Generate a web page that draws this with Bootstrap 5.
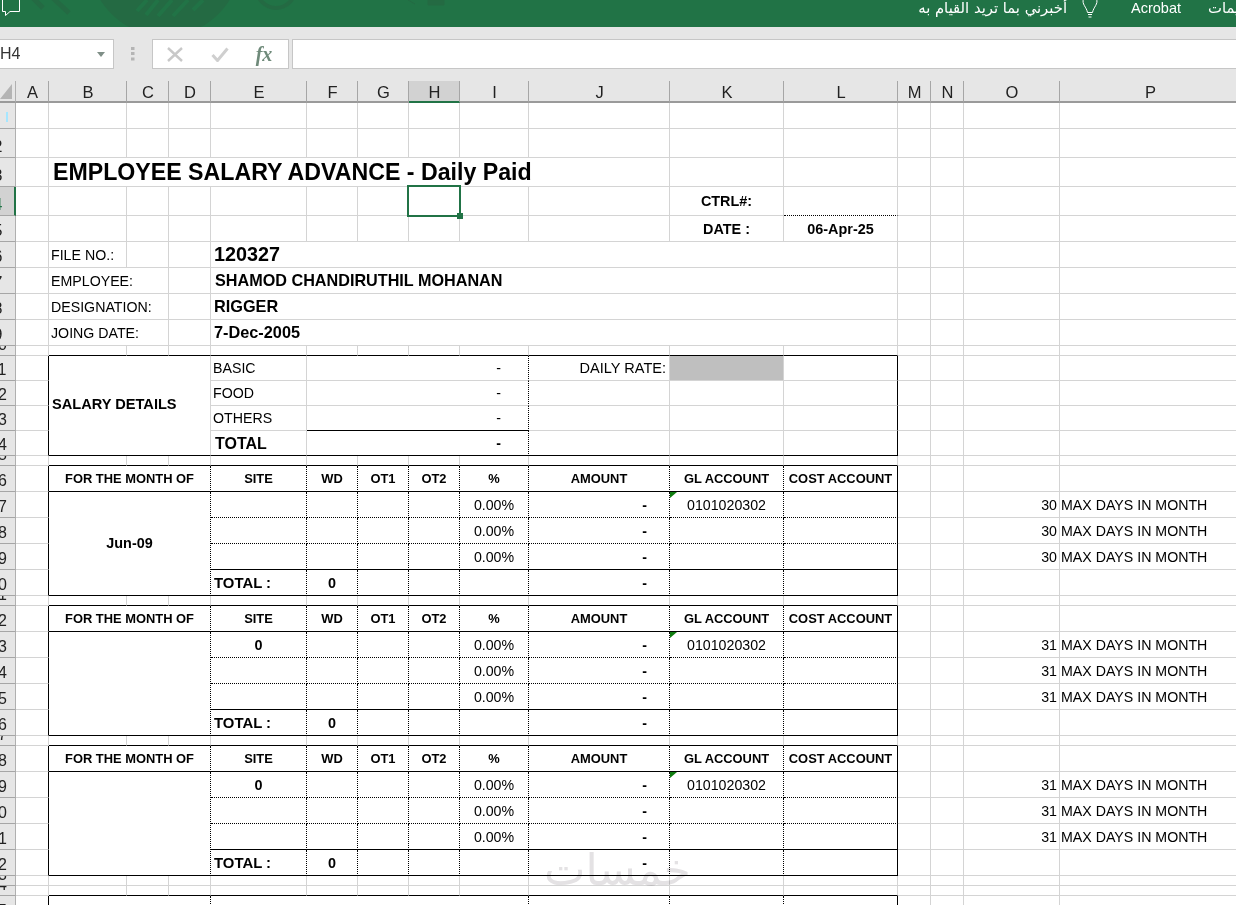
<!DOCTYPE html>
<html lang="en">
<head>
<meta charset="utf-8">
<title>Employee Salary Advance</title>
<link href="https://cdn.jsdelivr.net/npm/bootstrap@5.3.0/dist/css/bootstrap.min.css" rel="stylesheet">
<style>
html,body{margin:0;height:905px;overflow:hidden;background:#fff}
.page{width:1236px;height:905px;overflow:hidden;font-family:"Liberation Sans",Arial,sans-serif;color:#000}
.ribbon{height:27px;background:#217346;color:#fff}
.ribpat{left:0;top:0}
.ribright{width:319px;height:27px;margin-left:auto;white-space:nowrap}
.ribright>*{flex:0 0 auto}
.ask{font-family:"DejaVu Sans",sans-serif;font-size:14.8px;width:150px;line-height:16px;text-align:right}
.bulb{margin-left:15px}
.acro{font-size:14.5px;margin-left:33px;width:77px;line-height:16px}
.tabcut{font-family:"DejaVu Sans",sans-serif;font-size:14.8px;line-height:16px}
.fbar{height:54px;background:#e6e6e6;padding-top:12px}
.namebx{width:115px;height:30px;margin-left:-1px;background:#fff;border:1px solid #c6c6c6;font-size:16px;color:#333;line-height:28px;padding-right:8px}
.dotsw{width:38px;height:30px}
.fxbox{width:137px;height:30px;background:#fff;border:1px solid #c6c6c6;margin-right:3px}
.xic{margin-left:14px}
.chk{margin-left:28px}
.fxtxt{margin-left:26px;font-family:"Liberation Serif",serif;font-style:italic;font-weight:700;font-size:20px;color:#6f8a7a;line-height:28px;width:18px}
.fmla{height:30px;background:#fff;border:1px solid #c6c6c6;border-right:0;flex:1 1 auto}
table.sheet{border-collapse:separate;border-spacing:0;table-layout:fixed;width:1241px;font-size:14.2px;line-height:1}
.c16{width:16px}.c33{width:33px}.c78{width:78px}.c42{width:42px}.c96{width:96px}.c51{width:51px}.c69{width:69px}.c141{width:141px}.c114{width:114px}.c181{width:181px}
.sheet th,.sheet td{padding:1px 2px 0;border-right:1px solid #d4d4d4;border-bottom:1px solid #d4d4d4;font-weight:400;overflow:hidden;white-space:nowrap;vertical-align:middle}
.sheet thead th{height:22px;background:#e6e6e6;border-right:1px solid #a6a6a6;border-bottom:2px solid #9a9a9a;text-align:center;font-size:16.5px;color:#222;padding:2px 0 0 1px}
.sheet thead th.chsel{background:#d2d2d2;border-bottom-color:#217346}
.sheet thead th.corner{border-right-color:#b0b0b0;position:relative}
.cornertri{left:0;top:3px}
.sheet tbody th.rh{background:#e6e6e6;padding:0;border-right:1px solid #b0b0b0;border-bottom:1px solid #a6a6a6;font-size:16px;color:#222}
.sheet tbody th.rhsel{background:#d2d2d2;color:#217346;border-right:2px solid #217346}
.rn{display:flex;align-items:flex-end;justify-content:center;width:32px;margin-left:-18px;line-height:20px;overflow:hidden}
.cyanbit{width:2px;height:10px;background:#a6e6ff;margin:0 0 6px 18px}
tr.h10{height:10px}tr.h10 .rn{height:9px}
tr.h25{height:25px}tr.h25 .rn{height:24px}
tr.h26{height:26px}tr.h26 .rn{height:25px}
tr.h29{height:29px}tr.h29 .rn{height:28px}
.sheet td.r{border-right:1px solid #000}
.sheet td.b{border-bottom:1px solid #000}
.sheet td.dr{border-right:1px dotted #000}
.sheet td.db{border-bottom:1px dotted #000}
.sheet td.ttl{font-size:23.16px;font-weight:700;padding:2px 0 0 4px}
.sheet td.big{font-size:19.8px;font-weight:700;padding-left:3px}
.sheet td.nm{font-size:16.3px;font-weight:700;padding:0 2px 1px 3px}
.sheet td.nmw{font-size:16.2px;padding-left:4px}
.sheet td.hdc{font-size:12.9px;font-weight:700;text-align:center}
.sheet td.bd{font-size:14.4px;font-weight:700}
.sheet td.mon{padding:0 2px 1px}
.sheet td.ttl16{font-size:16px;font-weight:700;padding-left:4px}
.sheet td.sd{font-size:14.6px;font-weight:700;padding:0 2px 2px 3px}
.sheet td.tot{font-size:14.9px;font-weight:700;padding-left:3px}
.sheet td.rate{font-size:14.54px;padding-right:3px;text-align:right}
.sheet td.mx{padding-left:1px}
.sheet td.dash1{text-align:right;padding-right:27px}
.sheet td.dash2{text-align:right;padding-right:22px;font-weight:700}
.sheet td.graybg{background:#bfbfbf}
.sheet td.hostcell{overflow:visible;position:relative}
.tri{left:0;top:0;width:7px;height:6px;background:#107c10;clip-path:polygon(0 0,100% 0,0 100%)}
.cursor{left:-2px;top:-2px;width:54px;height:32px;border:2px solid #217346}
.handle{left:48px;top:26px;width:6px;height:6px;background:#217346}
.wm{left:544px;top:840px;font-family:"DejaVu Sans",sans-serif;font-size:44px;line-height:60px;color:#e4e2e4;mix-blend-mode:multiply;white-space:nowrap;pointer-events:none}
</style>
</head>
<body>
<div class="page position-relative">
  <div class="ribbon position-relative d-flex overflow-hidden">
    <svg class="ribpat position-absolute" width="480" height="27" viewBox="0 0 480 27" aria-hidden="true">
      <g fill="none" stroke="#246a43">
        <path d="M33 -2L43 8M53 -2L69 13" stroke-width="5"/>
        <circle cx="276" cy="-11" r="19" stroke-width="4"/>
      </g>
      <circle cx="165" cy="-40" r="76" fill="#246a43"/>
      <path d="M147 0L137 11M158 0L146 15M172 0L158 16M188 0L173 16M203 0L193 10" stroke="#217346" stroke-width="4" fill="none"/>
      <path d="M408 0L415 4M428 0H444V5H428Z" fill="#246a43" stroke="#246a43"/>
      <path d="M2.5 -2V11.5H5.5V15.5L10 11.5H19.5V-2" fill="none" stroke="#fff"/>
    </svg>
    <div class="ribright d-flex align-items-start position-relative">
      <span class="ask" dir="rtl" lang="ar">أخبرني بما تريد القيام به</span>
      <svg class="bulb" width="16" height="18" viewBox="0 0 16 18" aria-hidden="true"><path d="M1.5 -1C-.5 4 4.5 7 5.5 12.5H10.5C11.5 7 16.5 4 14.5 -1M6 14.5H10M6.5 17H9.5" fill="none" stroke="#fff"/></svg>
      <span class="acro" dir="ltr">Acrobat</span>
      <span class="tabcut"><span dir="rtl" lang="ar">تعليمات</span></span>
    </div>
  </div>
  <div class="fbar d-flex align-items-start">
    <div class="namebx d-flex align-items-center overflow-hidden"><span class="flex-grow-1">H4</span>
      <svg width="8" height="5" viewBox="0 0 8 5" aria-hidden="true"><path d="M0 0H8L4 5Z" fill="#7f8f87"/></svg></div>
    <div class="dotsw d-flex justify-content-center align-items-center">
      <svg width="4" height="14" viewBox="0 0 4 14" aria-hidden="true"><path d="M0 0h3.5v3h-3.5zM0 5h3.5v3h-3.5zM0 10.5h3.5v3h-3.5z" fill="#b4b4b4"/></svg></div>
    <div class="fxbox d-flex align-items-center">
      <svg class="xic" width="16" height="15" viewBox="0 0 16 15" aria-hidden="true"><path d="M1 1L15 14M15 1L1 14" stroke="#c8c8c8" stroke-width="2.4"/></svg>
      <svg class="chk" width="18" height="15" viewBox="0 0 18 15" aria-hidden="true"><path d="M1.5 8L6.5 13.5L16.5 1.5" fill="none" stroke="#cfcfcf" stroke-width="3"/></svg>
      <span class="fxtxt text-center">fx</span>
    </div>
    <div class="fmla"></div>
  </div>
  <table class="sheet">
    <colgroup>
      <col class="c16"><col class="c33"><col class="c78"><col class="c42"><col class="c42"><col class="c96"><col class="c51"><col class="c51"><col class="c51"><col class="c69"><col class="c141"><col class="c114"><col class="c114"><col class="c33"><col class="c33"><col class="c96"><col class="c181">
    </colgroup>
    <thead><tr>
      <th class="corner"><svg class="cornertri position-absolute" width="12" height="15" viewBox="0 0 12 15" aria-hidden="true"><path d="M12 0V15H0Z" fill="#b4b4b4"/></svg></th>
      <th>A</th><th>B</th><th>C</th><th>D</th><th>E</th><th>F</th><th>G</th><th class="chsel">H</th><th>I</th><th>J</th><th>K</th><th>L</th><th>M</th><th>N</th><th>O</th><th>P</th>
    </tr></thead>
    <tbody>
      <tr class="h26"><th class="rh"><div class="rn"><i class="cyanbit"></i></div></th><td></td><td></td><td></td><td></td><td></td><td></td><td></td><td></td><td></td><td></td><td></td><td></td><td></td><td></td><td></td><td></td></tr>
      <tr class="h29"><th class="rh"><div class="rn">2</div></th><td></td><td></td><td></td><td></td><td></td><td></td><td></td><td></td><td></td><td></td><td></td><td></td><td></td><td></td><td></td><td></td></tr>
      <tr class="h29"><th class="rh"><div class="rn">3</div></th><td></td><td colspan="9" class="ttl">EMPLOYEE SALARY ADVANCE - Daily Paid</td><td></td><td></td><td></td><td></td><td></td><td></td></tr>
      <tr class="h29"><th class="rh rhsel"><div class="rn">4</div></th><td></td><td></td><td></td><td></td><td></td><td></td><td></td><td class="hostcell"><div class="cursor position-absolute"></div><div class="handle position-absolute"></div></td><td></td><td></td><td class="bd text-center">CTRL#:</td><td class="db"></td><td></td><td></td><td></td><td></td></tr>
      <tr class="h26"><th class="rh"><div class="rn">5</div></th><td></td><td></td><td></td><td></td><td></td><td></td><td></td><td></td><td></td><td></td><td class="bd text-center">DATE :</td><td class="bd text-center">06-Apr-25</td><td></td><td></td><td></td><td></td></tr>
      <tr class="h26"><th class="rh"><div class="rn">6</div></th><td></td><td>FILE NO.:</td><td></td><td></td><td colspan="8" class="big">120327</td><td></td><td></td><td></td><td></td></tr>
      <tr class="h26"><th class="rh"><div class="rn">7</div></th><td></td><td colspan="2">EMPLOYEE:</td><td></td><td colspan="8" class="nm nmw">SHAMOD CHANDIRUTHIL MOHANAN</td><td></td><td></td><td></td><td></td></tr>
      <tr class="h26"><th class="rh"><div class="rn">8</div></th><td></td><td colspan="2">DESIGNATION:</td><td></td><td colspan="8" class="nm">RIGGER</td><td></td><td></td><td></td><td></td></tr>
      <tr class="h26"><th class="rh"><div class="rn">9</div></th><td></td><td colspan="2">JOING DATE:</td><td></td><td colspan="8" class="nm">7-Dec-2005</td><td></td><td></td><td></td><td></td></tr>
      <tr class="h10"><th class="rh"><div class="rn">10</div></th><td></td><td class="b"></td><td class="b"></td><td class="b"></td><td class="b"></td><td class="b"></td><td class="b"></td><td class="b"></td><td class="b"></td><td class="b"></td><td class="b"></td><td class="b"></td><td></td><td></td><td></td><td></td></tr>

      <tr class="h25"><th class="rh"><div class="rn">11</div></th><td class="r"></td><td colspan="3" rowspan="4" class="b sd">SALARY DETAILS</td><td>BASIC</td><td colspan="4" class="dr dash1">-</td><td class="rate">DAILY RATE:</td><td class="graybg"></td><td class="r"></td><td></td><td></td><td></td><td></td></tr>
      <tr class="h25"><th class="rh"><div class="rn">12</div></th><td class="r"></td><td>FOOD</td><td colspan="4" class="dr dash1">-</td><td></td><td></td><td class="r"></td><td></td><td></td><td></td><td></td></tr>
      <tr class="h25"><th class="rh"><div class="rn">13</div></th><td class="r"></td><td>OTHERS</td><td colspan="4" class="dr b dash1">-</td><td></td><td></td><td class="r"></td><td></td><td></td><td></td><td></td></tr>
      <tr class="h25"><th class="rh"><div class="rn">14</div></th><td class="r"></td><td class="b ttl16">TOTAL</td><td colspan="4" class="dr b dash1 fw-bold">-</td><td class="b"></td><td class="b"></td><td class="r b"></td><td></td><td></td><td></td><td></td></tr>
      <tr class="h10"><th class="rh"><div class="rn">15</div></th><td></td><td class="b"></td><td class="b"></td><td class="b"></td><td class="b"></td><td class="b"></td><td class="b"></td><td class="b"></td><td class="b"></td><td class="b"></td><td class="b"></td><td class="b"></td><td></td><td></td><td></td><td></td></tr>

      <tr class="h26"><th class="rh"><div class="rn">16</div></th><td class="r"></td><td colspan="3" class="hdc dr b">FOR THE MONTH OF</td><td class="hdc dr b">SITE</td><td class="hdc dr b">WD</td><td class="hdc dr b">OT1</td><td class="hdc dr b">OT2</td><td class="hdc dr b">%</td><td class="hdc dr b">AMOUNT</td><td class="hdc dr b">GL ACCOUNT</td><td class="hdc r b">COST ACCOUNT</td><td></td><td></td><td></td><td></td></tr>
      <tr class="h26"><th class="rh"><div class="rn">17</div></th><td class="r"></td><td colspan="3" rowspan="4" class="bd mon b dr text-center">Jun-09</td><td class="dr db"></td><td class="dr db"></td><td class="dr db"></td><td class="dr db"></td><td class="dr db text-center">0.00%</td><td class="dr db dash2">-</td><td class="hostcell dr db text-center"><div class="tri position-absolute"></div>0101020302</td><td class="r db"></td><td></td><td></td><td class="text-end">30</td><td class="mx">MAX DAYS IN MONTH</td></tr>
      <tr class="h26"><th class="rh"><div class="rn">18</div></th><td class="r"></td><td class="dr db"></td><td class="dr db"></td><td class="dr db"></td><td class="dr db"></td><td class="dr db text-center">0.00%</td><td class="dr db dash2">-</td><td class="dr db"></td><td class="r db"></td><td></td><td></td><td class="text-end">30</td><td class="mx">MAX DAYS IN MONTH</td></tr>
      <tr class="h26"><th class="rh"><div class="rn">19</div></th><td class="r"></td><td class="dr b"></td><td class="dr b"></td><td class="dr b"></td><td class="dr b"></td><td class="dr b text-center">0.00%</td><td class="dr b dash2">-</td><td class="dr b"></td><td class="r b"></td><td></td><td></td><td class="text-end">30</td><td class="mx">MAX DAYS IN MONTH</td></tr>
      <tr class="h26"><th class="rh"><div class="rn">20</div></th><td class="r"></td><td class="tot dr b">TOTAL :</td><td class="bd dr b text-center">0</td><td class="dr b"></td><td class="dr b"></td><td class="dr b"></td><td class="dr b dash2">-</td><td class="dr b"></td><td class="r b"></td><td></td><td></td><td></td><td></td></tr>
      <tr class="h10"><th class="rh"><div class="rn">21</div></th><td></td><td class="b"></td><td class="b"></td><td class="b"></td><td class="b"></td><td class="b"></td><td class="b"></td><td class="b"></td><td class="b"></td><td class="b"></td><td class="b"></td><td class="b"></td><td></td><td></td><td></td><td></td></tr>

      <tr class="h26"><th class="rh"><div class="rn">22</div></th><td class="r"></td><td colspan="3" class="hdc dr b">FOR THE MONTH OF</td><td class="hdc dr b">SITE</td><td class="hdc dr b">WD</td><td class="hdc dr b">OT1</td><td class="hdc dr b">OT2</td><td class="hdc dr b">%</td><td class="hdc dr b">AMOUNT</td><td class="hdc dr b">GL ACCOUNT</td><td class="hdc r b">COST ACCOUNT</td><td></td><td></td><td></td><td></td></tr>
      <tr class="h26"><th class="rh"><div class="rn">23</div></th><td class="r"></td><td colspan="3" rowspan="4" class="bd b dr text-center"></td><td class="bd dr db text-center">0</td><td class="dr db"></td><td class="dr db"></td><td class="dr db"></td><td class="dr db text-center">0.00%</td><td class="dr db dash2">-</td><td class="hostcell dr db text-center"><div class="tri position-absolute"></div>0101020302</td><td class="r db"></td><td></td><td></td><td class="text-end">31</td><td class="mx">MAX DAYS IN MONTH</td></tr>
      <tr class="h26"><th class="rh"><div class="rn">24</div></th><td class="r"></td><td class="dr db"></td><td class="dr db"></td><td class="dr db"></td><td class="dr db"></td><td class="dr db text-center">0.00%</td><td class="dr db dash2">-</td><td class="dr db"></td><td class="r db"></td><td></td><td></td><td class="text-end">31</td><td class="mx">MAX DAYS IN MONTH</td></tr>
      <tr class="h26"><th class="rh"><div class="rn">25</div></th><td class="r"></td><td class="dr b"></td><td class="dr b"></td><td class="dr b"></td><td class="dr b"></td><td class="dr b text-center">0.00%</td><td class="dr b dash2">-</td><td class="dr b"></td><td class="r b"></td><td></td><td></td><td class="text-end">31</td><td class="mx">MAX DAYS IN MONTH</td></tr>
      <tr class="h26"><th class="rh"><div class="rn">26</div></th><td class="r"></td><td class="tot dr b">TOTAL :</td><td class="bd dr b text-center">0</td><td class="dr b"></td><td class="dr b"></td><td class="dr b"></td><td class="dr b dash2">-</td><td class="dr b"></td><td class="r b"></td><td></td><td></td><td></td><td></td></tr>
      <tr class="h10"><th class="rh"><div class="rn">27</div></th><td></td><td class="b"></td><td class="b"></td><td class="b"></td><td class="b"></td><td class="b"></td><td class="b"></td><td class="b"></td><td class="b"></td><td class="b"></td><td class="b"></td><td class="b"></td><td></td><td></td><td></td><td></td></tr>

      <tr class="h26"><th class="rh"><div class="rn">28</div></th><td class="r"></td><td colspan="3" class="hdc dr b">FOR THE MONTH OF</td><td class="hdc dr b">SITE</td><td class="hdc dr b">WD</td><td class="hdc dr b">OT1</td><td class="hdc dr b">OT2</td><td class="hdc dr b">%</td><td class="hdc dr b">AMOUNT</td><td class="hdc dr b">GL ACCOUNT</td><td class="hdc r b">COST ACCOUNT</td><td></td><td></td><td></td><td></td></tr>
      <tr class="h26"><th class="rh"><div class="rn">29</div></th><td class="r"></td><td colspan="3" rowspan="4" class="bd b dr text-center"></td><td class="bd dr db text-center">0</td><td class="dr db"></td><td class="dr db"></td><td class="dr db"></td><td class="dr db text-center">0.00%</td><td class="dr db dash2">-</td><td class="hostcell dr db text-center"><div class="tri position-absolute"></div>0101020302</td><td class="r db"></td><td></td><td></td><td class="text-end">31</td><td class="mx">MAX DAYS IN MONTH</td></tr>
      <tr class="h26"><th class="rh"><div class="rn">30</div></th><td class="r"></td><td class="dr db"></td><td class="dr db"></td><td class="dr db"></td><td class="dr db"></td><td class="dr db text-center">0.00%</td><td class="dr db dash2">-</td><td class="dr db"></td><td class="r db"></td><td></td><td></td><td class="text-end">31</td><td class="mx">MAX DAYS IN MONTH</td></tr>
      <tr class="h26"><th class="rh"><div class="rn">31</div></th><td class="r"></td><td class="dr b"></td><td class="dr b"></td><td class="dr b"></td><td class="dr b"></td><td class="dr b text-center">0.00%</td><td class="dr b dash2">-</td><td class="dr b"></td><td class="r b"></td><td></td><td></td><td class="text-end">31</td><td class="mx">MAX DAYS IN MONTH</td></tr>
      <tr class="h26"><th class="rh"><div class="rn">32</div></th><td class="r"></td><td class="tot dr b">TOTAL :</td><td class="bd dr b text-center">0</td><td class="dr b"></td><td class="dr b"></td><td class="dr b"></td><td class="dr b dash2">-</td><td class="dr b"></td><td class="r b"></td><td></td><td></td><td></td><td></td></tr>
      <tr class="h10"><th class="rh"><div class="rn">33</div></th><td></td><td></td><td></td><td></td><td></td><td></td><td></td><td></td><td></td><td></td><td></td><td></td><td></td><td></td><td></td><td></td></tr>
      <tr class="h10"><th class="rh"><div class="rn">34</div></th><td></td><td class="b"></td><td class="b"></td><td class="b"></td><td class="b"></td><td class="b"></td><td class="b"></td><td class="b"></td><td class="b"></td><td class="b"></td><td class="b"></td><td class="b"></td><td></td><td></td><td></td><td></td></tr>
      <tr class="h26"><th class="rh"><div class="rn">35</div></th><td class="r"></td><td colspan="3" class="dr"></td><td colspan="5" class="dr"></td><td class="dr"></td><td class="dr"></td><td class="r"></td><td></td><td></td><td></td><td></td></tr>
    </tbody>
  </table>
  <div class="wm position-absolute" dir="rtl" lang="ar">خمسات</div>
</div>
</body>
</html>
